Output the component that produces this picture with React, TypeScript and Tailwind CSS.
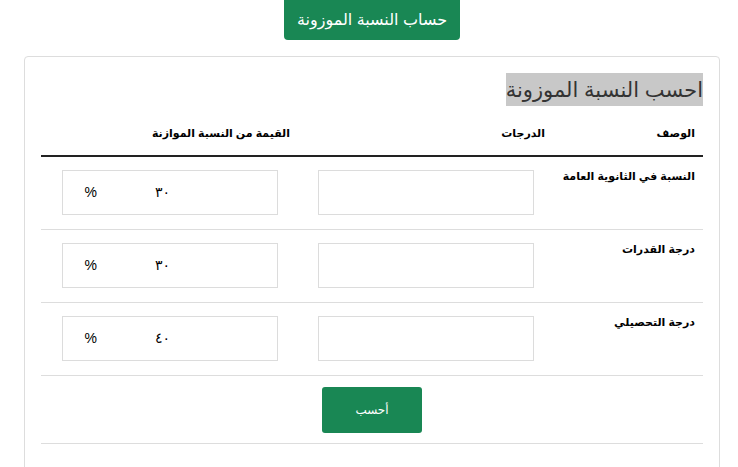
import React from "react";

const rows = [
  { label: "النسبة في الثانوية العامة", value: "٣٠" },
  { label: "درجة القدرات", value: "٣٠" },
  { label: "درجة التحصيلي", value: "٤٠" },
];

export default function App() {
  return (
    <div
      className="w-[738px] h-[467px] overflow-hidden bg-white text-[#212529]"
      style={{ fontFamily: '"Liberation Sans", "DejaVu Sans", Arial, sans-serif' }}
    >
      <div className="ml-[24px] w-[696px]">
        <div className="flex justify-center">
          <button className="w-[176px] h-[40px] bg-[#198754] text-white text-[16px] rounded-b-[4px] flex items-center justify-center">
            حساب النسبة الموزونة
          </button>
        </div>
        <div className="mt-[16px] border border-[#dddddd] rounded-[4px] px-[16px] pt-[16px] h-[420px]" dir="rtl">
          <div className="h-[33px] flex">
            <span className="bg-[#c8c8c8] text-[21px] leading-[33px] text-[#333]">احسب النسبة الموزونة</span>
          </div>
          <div className="flex h-[51px] border-b-2 border-[#222] text-[11px] font-bold text-black whitespace-nowrap">
            <div className="w-[150px] pr-[8px] pt-[19px]">الوصف</div>
            <div className="w-[255px] pr-[8px] pt-[19px]">الدرجات</div>
            <div className="flex-1 pr-[8px] pt-[19px]">القيمة من النسبة الموازنة</div>
          </div>
          {rows.map((r, i) => (
            <div key={i} className="flex h-[73px] border-b border-[#dddddd]">
              <div className="w-[150px] pr-[8px] pt-[11px] text-[11px] font-bold text-black whitespace-nowrap">{r.label}</div>
              <div className="w-[255px] flex justify-center pt-[13px]">
                <div className="w-[216px] h-[45px] border border-[#dcdcdc]" />
              </div>
              <div className="flex-1 flex justify-center pt-[13px]">
                <div className="w-[216px] h-[45px] border border-[#dcdcdc] flex items-center text-[14px] text-black" dir="ltr">
                  <span className="ml-[22px]">%</span>
                  <span className="ml-[58px]">{r.value}</span>
                </div>
              </div>
            </div>
          ))}
          <div className="h-[68px] border-b border-[#dddddd] flex justify-center pt-[11px]">
            <button className="w-[100px] h-[46px] bg-[#198754] text-white text-[12px] rounded-[3px]">أحسب</button>
          </div>
        </div>
      </div>
    </div>
  );
}
